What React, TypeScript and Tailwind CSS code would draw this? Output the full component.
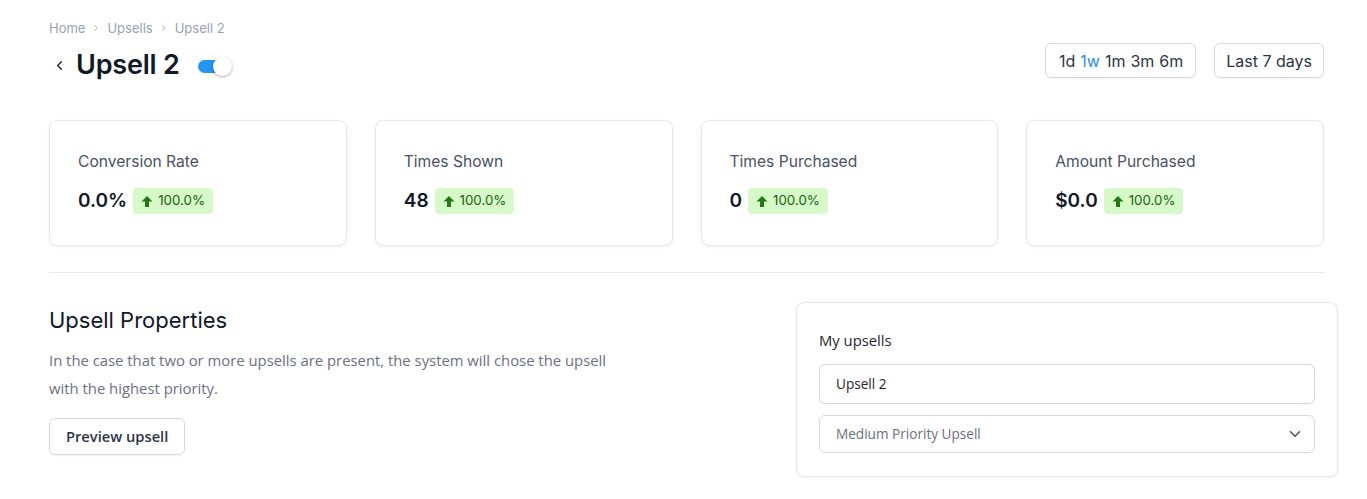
import { ChevronDown, ChevronLeft, ChevronRight } from "lucide-react"

const stats = [
  { label: "Conversion Rate", value: "0.0%", change: "100.0%" },
  { label: "Times Shown", value: "48", change: "100.0%" },
  { label: "Times Purchased", value: "0", change: "100.0%" },
  { label: "Amount Purchased", value: "$0.0", change: "100.0%" },
]

function ArrowUp() {
  return (
    <svg width="12" height="13" viewBox="0 0 12 13" className="text-[#1f7a12]" aria-hidden="true">
      <path d="M6 1 L11.5 6.6 L8 6.6 L8 12 L4 12 L4 6.6 L0.5 6.6 Z" fill="currentColor" />
    </svg>
  )
}

function StatCard({ label, value, change }: { label: string; value: string; change: string }) {
  return (
    <div className="h-[126px] rounded-lg border border-gray-200 bg-white px-7 pt-[31px] shadow-[0_1px_3px_rgba(0,0,0,0.06)]">
      <div className="text-[15.6px] leading-5 text-[#4a5163]">{label}</div>
      <div className="mt-[15px] flex items-center gap-[6px]">
        <span className="text-[19px] font-semibold leading-7 text-[#111827]">{value}</span>
        <span className="flex h-[26px] items-center gap-[5px] rounded-[4px] bg-[#d7f8c8] px-[8px] text-[13.3px] text-[#17650f]">
          <ArrowUp />
          {change}
        </span>
      </div>
    </div>
  )
}

export default function App() {
  return (
    <div className="min-h-screen bg-white pl-[49px] pr-[43px] pt-[19px] font-['Inter',sans-serif] text-[#111827]">
      {/* Breadcrumb */}
      <nav className="flex items-center gap-[6px] text-[13px] leading-[18px] text-[#9aa0ad]">
        <span>Home</span>
        <ChevronRight size={10} strokeWidth={2} />
        <span>Upsells</span>
        <ChevronRight size={10} strokeWidth={2} />
        <span>Upsell 2</span>
      </nav>

      {/* Header */}
      <div className="mt-[5px] flex items-start justify-between">
        <div className="mt-[4px] flex h-[38px] items-center">
          <ChevronLeft size={15} strokeWidth={2} className="ml-[3px] text-[#111827]" />
          <h1 className="ml-[9px] text-[27px] font-semibold leading-[38px] tracking-[-0.2px]">Upsell 2</h1>
          <div className="relative ml-[18px] mt-[2px] h-[19px] w-[34px]">
            <div className="absolute left-0 top-[3px] h-[13px] w-[28px] rounded-full bg-[#2196f3]" />
            <div className="absolute right-0 top-0 h-[19px] w-[19px] rounded-full bg-white shadow-[0_1px_3px_rgba(0,0,0,0.35)]" />
          </div>
        </div>
        <div className="mt-[1px] flex gap-[18px] text-[16px] text-[#2c3446]">
          <div className="flex h-[35px] items-center gap-[5px] rounded-md border border-[#d5d8e0] pl-[13px] pr-[12px] shadow-[0_1px_2px_rgba(0,0,0,0.05)]">
            <span>1d</span>
            <span className="text-[#2a8cf0]">1w</span>
            <span>1m</span>
            <span>3m</span>
            <span>6m</span>
          </div>
          <div className="flex h-[35px] items-center rounded-md border border-[#d5d8e0] px-[11px] shadow-[0_1px_2px_rgba(0,0,0,0.05)]">
            Last 7 days
          </div>
        </div>
      </div>

      {/* Stats */}
      <div className="mt-[36px] grid grid-cols-4 gap-[28px]">
        {stats.map((s) => (
          <StatCard key={s.label} {...s} />
        ))}
      </div>

      <div className="mt-[26px] h-px bg-[#e8e8ea]" />

      {/* Properties */}
      <div className="mt-[29px] flex justify-between">
        <div className="pt-[3px]">
          <h2 className="text-[22px] leading-[30px] text-[#111827]">Upsell Properties</h2>
          <p className="mt-[11px] w-[580px] font-['Open_Sans',sans-serif] text-[14.85px] leading-[28px] text-[#6b7080]">
            In the case that two or more upsells are present, the system will chose the upsell with the highest priority.
          </p>
          <button className="mt-[16px] h-[37px] rounded-md border border-[#d5d8e0] px-[16px] font-['Open_Sans',sans-serif] text-[14.7px] font-semibold text-[#2c3446] shadow-[0_1px_2px_rgba(0,0,0,0.05)]">
            Preview upsell
          </button>
        </div>
        <div className="-mr-[14px] h-[175px] w-[542px] rounded-lg border border-gray-200 bg-white px-[22px] pt-[27px] shadow-[0_1px_3px_rgba(0,0,0,0.06)] font-['Open_Sans',sans-serif]">
          <div className="text-[14.8px] leading-5 text-[#1f2430]">My upsells</div>
          <div className="mt-[14px] flex h-[40px] items-center rounded-md border border-[#d5d8e0] px-[16px] text-[13.6px] text-[#1f2430] shadow-[0_1px_2px_rgba(0,0,0,0.05)]">
            Upsell 2
          </div>
          <div className="mt-[11px] flex h-[38px] items-center justify-between rounded-md border border-[#d5d8e0] pl-[16px] pr-[10px] text-[13.6px] text-[#6b7080]">
            <span>Medium Priority Upsell</span>
            <ChevronDown size={18} strokeWidth={2} className="text-[#4a5060]" />
          </div>
        </div>
      </div>
    </div>
  )
}
